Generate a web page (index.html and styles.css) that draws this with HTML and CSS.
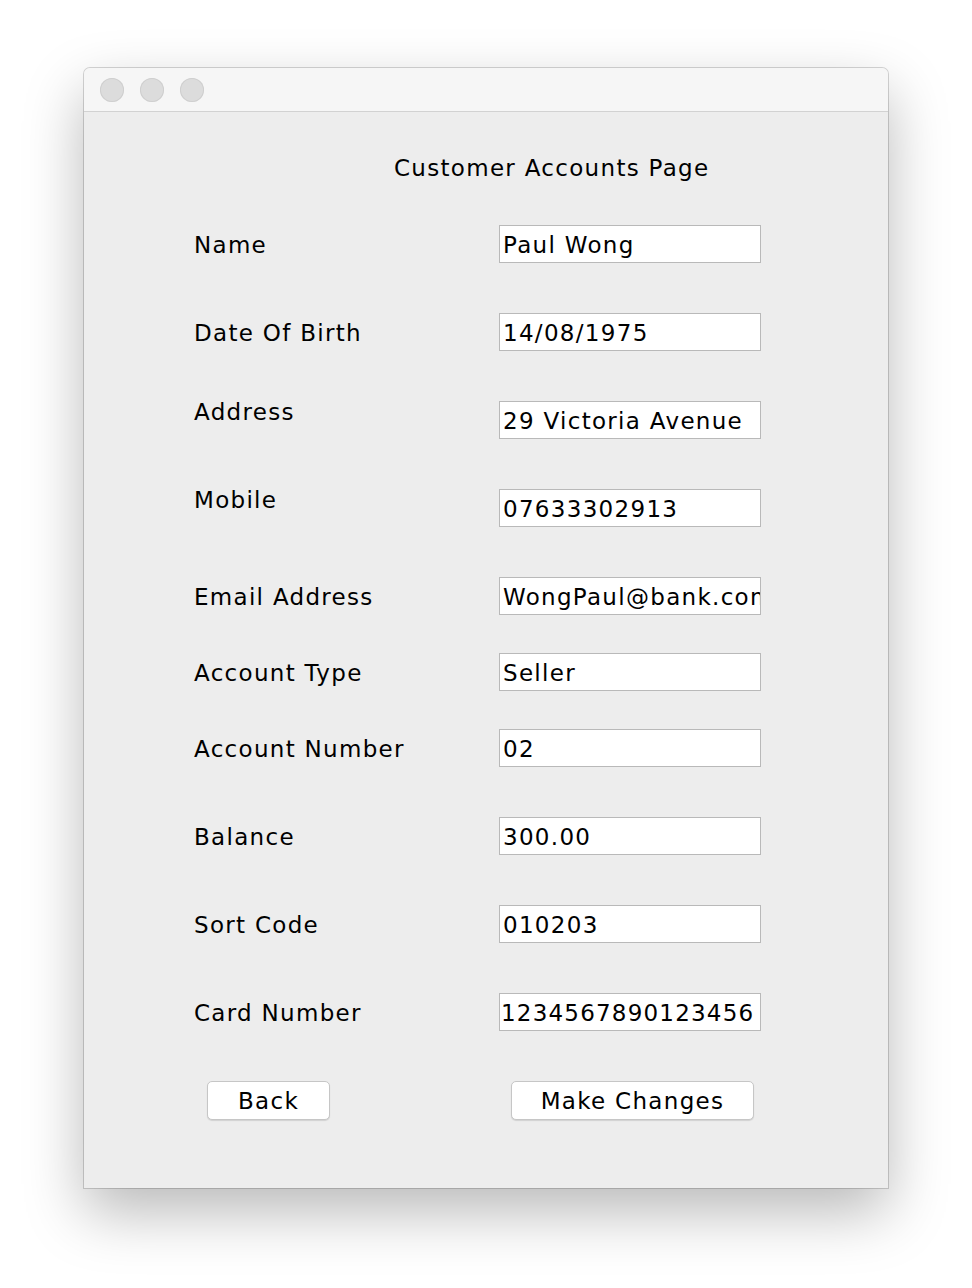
FILE: index.html
```html
<!DOCTYPE html>
<html>
<head>
<meta charset="utf-8">
<link rel="stylesheet" href="styles.css">
</head>
<body>
<div class="window">
  <div class="titlebar">
    <span class="light"></span><span class="light"></span><span class="light"></span>
  </div>
  <div class="content">
    <div class="heading">Customer Accounts Page</div>
    <div class="form">
      <div class="row"><div class="label">Name</div><div class="field">Paul Wong</div></div>
      <div class="row gap-l"><div class="label">Date Of Birth</div><div class="field">14/08/1975</div></div>
      <div class="row gap-l"><div class="label raised">Address</div><div class="field">29 Victoria Avenue</div></div>
      <div class="row gap-l"><div class="label raised">Mobile</div><div class="field">07633302913</div></div>
      <div class="row gap-l"><div class="label">Email Address</div><div class="field">WongPaul@bank.com</div></div>
      <div class="row gap-s"><div class="label">Account Type</div><div class="field">Seller</div></div>
      <div class="row gap-s"><div class="label">Account Number</div><div class="field">02</div></div>
      <div class="row gap-l"><div class="label">Balance</div><div class="field">300.00</div></div>
      <div class="row gap-l"><div class="label">Sort Code</div><div class="field">010203</div></div>
      <div class="row gap-l"><div class="label">Card Number</div><div class="field tightpad">1234567890123456</div></div>
    </div>
    <div class="buttons">
      <button class="btn back">Back</button>
      <button class="btn change">Make Changes</button>
    </div>
  </div>
</div>
</body>
</html>
```

FILE: styles.css
```css
html, body {
  margin: 0;
  padding: 0;
  background: #ffffff;
}
body {
  font-family: "DejaVu Sans", "Liberation Sans", sans-serif;
  font-size: 23px;
  letter-spacing: 1.3px;
  color: #000;
  padding: 68px 0 0 84px;
  height: 1288px;
  box-sizing: border-box;
  overflow: hidden;
}
.window {
  width: 804px;
  height: 1120px;
  background: #ededed;
  border-radius: 6px 6px 0 0;
  box-shadow: 0 0 0 1px rgba(0,0,0,0.16), 0 24px 60px rgba(0,0,0,0.28);
  display: flex;
  flex-direction: column;
}
.titlebar {
  height: 44px;
  background: #f6f6f6;
  border-bottom: 1px solid #d2d2d2;
  border-radius: 6px 6px 0 0;
  display: flex;
  align-items: center;
  gap: 16px;
  padding-left: 16px;
  padding-top: 1px;
  box-sizing: border-box;
}
.light {
  width: 24px;
  height: 24px;
  border-radius: 50%;
  background: #dcdcdc;
  box-shadow: inset 0 0 0 1px #cfcfcf;
}
.content {
  padding: 41px 0 0 110px;
}
.heading {
  height: 28px;
  line-height: 28px;
  margin-left: 200px;
  padding-top: 1px;
}
.form {
  margin-top: 43px;
  display: flex;
  flex-direction: column;
}
.row {
  display: flex;
  align-items: center;
  height: 38px;
}
.gap-l { margin-top: 50px; }
.gap-s { margin-top: 38px; }
.label {
  width: 305px;
  line-height: 28px;
  padding-top: 2px;
}
.label.raised {
  padding-top: 0;
  padding-bottom: 16px;
}
.field {
  width: 262px;
  height: 38px;
  box-sizing: border-box;
  background: #fff;
  border: 1px solid #b9b9b9;
  padding: 1px 0 0 3px;
  line-height: 36px;
  white-space: nowrap;
  overflow: hidden;
}
.field.tightpad {
  padding-left: 1px;
  letter-spacing: 1.2px;
}
.buttons {
  margin-top: 50px;
  display: flex;
}
.btn {
  font-family: inherit;
  font-size: 23px;
  letter-spacing: 1.3px;
  color: #000;
  height: 39px;
  background: #ffffff;
  border: 1px solid #c6c6c6;
  border-radius: 5px;
  box-shadow: 0 1px 1px rgba(0,0,0,0.12);
  padding: 1px 0 0 0;
  line-height: 36px;
}
.back {
  width: 123px;
  margin-left: 13px;
}
.change {
  width: 243px;
  margin-left: 181px;
}
```
